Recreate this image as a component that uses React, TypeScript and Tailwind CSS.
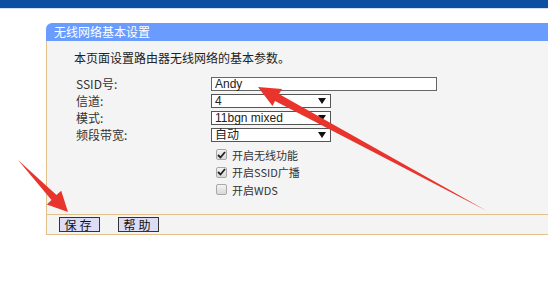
const rows = [
  { label: "SSID号:", value: "Andy", kind: "input" },
  { label: "信道:", value: "4", kind: "select" },
  { label: "模式:", value: "11bgn mixed", kind: "select" },
  { label: "频段带宽:", value: "自动", kind: "select" },
];

const checks = [
  { label: "开启无线功能", on: true },
  { label: "开启SSID广播", on: true },
  { label: "开启WDS", on: false },
];

const Caret = () => (
  <svg width="8" height="6" viewBox="0 0 8 6" className="mr-[4px]">
    <path d="M0 0 L8 0 L4 6 Z" fill="#111" />
  </svg>
);

const Check = ({ on }: { on: boolean }) => (
  <div className="w-[11px] h-[11px] rounded-[2px] border border-[#a8a8a8] bg-gradient-to-b from-[#f4f4f4] to-[#d8d8d8] flex items-center justify-center">
    {on && (
      <svg width="9" height="8" viewBox="0 0 9 8">
        <path d="M1 4 L3.5 6.5 L8 1" stroke="#222" strokeWidth="1.8" fill="none" />
      </svg>
    )}
  </div>
);

const Arrows = () => (
  <svg width="548" height="294" className="absolute left-0 top-0 pointer-events-none">
    {/* big arrow pointing at SSID field */}
    <path d="M258 87 L282 89 L279 94 L487 211 L275 101 L272.5 106 Z" fill="#e8342c" />
    {/* left arrow pointing at save button */}
    <path d="M68 212 L46.8 204.5 L51.5 200 L18 160 L56.5 195 L61.2 190.7 Z" fill="#e8342c" />
  </svg>
);

export default function App() {
  return (
    <div className="relative w-[548px] h-[294px] bg-white overflow-hidden font-['Noto_Sans_CJK_SC','Liberation_Sans',sans-serif] text-[12px] text-[#222]">
      <div className="h-[8px] bg-[#0c4e9f]" />
      <div className="h-[1px] bg-[#cfe0f0]" />
      <div className="ml-[46px] mt-[14px] w-[520px]">
        <div className="h-[18px] rounded-tl-[6px] bg-[#6a9bff] text-white pl-[8px] leading-[18px]">
          无线网络基本设置
        </div>
        <div className="border-l border-b border-[#e2c089] bg-[#f4f4f4]">
          <div className="h-[173px] pl-[27px] pt-[10px]">
            <div className="leading-[14px]">本页面设置路由器无线网络的基本参数。</div>
            <div className="mt-[12px] flex flex-col">
              {rows.map((r) => (
                <div key={r.label} className="h-[17px] flex items-start">
                  <div className="w-[137px] leading-[14px] pl-[2px] text-[#333]">{r.label}</div>
                  {r.kind === "input" ? (
                    <div className="w-[226px] h-[14px] border border-[#666] bg-white pl-[3px] leading-[12px] font-['Liberation_Sans'] text-[12px]">
                      {r.value}
                    </div>
                  ) : (
                    <div className="w-[120px] h-[14px] border border-[#555] bg-white pl-[3px] flex items-center justify-between leading-[12px] text-[12px] font-['Liberation_Sans','Noto_Sans_CJK_SC',sans-serif]">
                      <span>{r.value}</span>
                      <Caret />
                    </div>
                  )}
                </div>
              ))}
            </div>
            <div className="ml-[142px] mt-[1px] flex flex-col">
              {checks.map((c) => (
                <div key={c.label} className="h-[17.5px] flex items-center gap-[5px]">
                  <Check on={c.on} />
                  <span className="text-[11px] text-[#333]">{c.label}</span>
                </div>
              ))}
            </div>
          </div>
          <div className="border-t border-[#e2c089] h-[20px] pl-[12px] flex items-center gap-[18px]">
            <button className="w-[41px] h-[15px] border border-[#333] bg-[#dcdcf6] text-[12px] leading-[13px] tracking-[3px] text-[#111]">
              保存
            </button>
            <button className="w-[41px] h-[15px] border border-[#333] bg-[#dcdcf6] text-[12px] leading-[13px] tracking-[3px] text-[#111]">
              帮助
            </button>
          </div>
        </div>
      </div>
      <Arrows />
    </div>
  );
}
